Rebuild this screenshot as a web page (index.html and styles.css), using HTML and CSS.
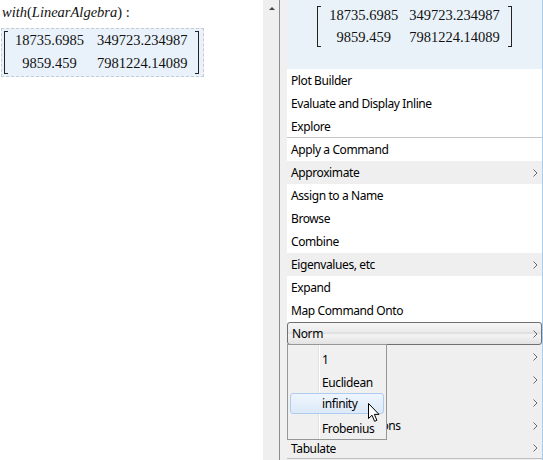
FILE: index.html
```html
<!DOCTYPE html>
<html lang="en">
<head>
  <meta charset="UTF-8" />
  <title>Matrix context menu</title>
  <link rel="stylesheet" href="styles.css">
</head>
<body>

<div class="screen">
  <!-- worksheet -->
  <div class="worksheet">
    <div class="input"><i>with</i>(<i>LinearAlgebra</i>) :</div>
    <div class="output">
      <div class="matrix">
        <span class="br left"></span>
        <div class="cells">
          <span>18735.6985</span><span>349723.234987</span>
          <span>9859.459</span><span>7981224.14089</span>
        </div>
        <span class="br right"></span>
      </div>
    </div>
  </div>

  <div class="scrollbar"><span class="up"></span></div>

  <!-- context menu -->
  <div class="menu">
    <div class="preview">
      <div class="matrix">
        <span class="br left"></span>
        <div class="cells">
          <span>18735.6985</span><span>349723.234987</span>
          <span>9859.459</span><span>7981224.14089</span>
        </div>
        <span class="br right"></span>
      </div>
    </div>

    <ul class="items">
      <li>Plot Builder</li>
      <li>Evaluate and Display Inline</li>
      <li class="sep">Explore</li>
      <li>Apply a Command</li>
      <li class="sub">Approximate<svg class="arrow" width="5" height="8" viewBox="0 0 5 8"><path d="M0.5 0.5 L4 4 L0.5 7.5" /></svg></li>
      <li>Assign to a Name</li>
      <li>Browse</li>
      <li>Combine</li>
      <li class="sub">Eigenvalues, etc<svg class="arrow" width="5" height="8" viewBox="0 0 5 8"><path d="M0.5 0.5 L4 4 L0.5 7.5" /></svg></li>
      <li>Expand</li>
      <li>Map Command Onto</li>
      <li class="sub hot">Norm<svg class="arrow" width="5" height="8" viewBox="0 0 5 8"><path d="M0.5 0.5 L4 4 L0.5 7.5" /></svg></li>
      <li class="sub">Plots<svg class="arrow" width="5" height="8" viewBox="0 0 5 8"><path d="M0.5 0.5 L4 4 L0.5 7.5" /></svg></li>
      <li class="sub">Queries<svg class="arrow" width="5" height="8" viewBox="0 0 5 8"><path d="M0.5 0.5 L4 4 L0.5 7.5" /></svg></li>
      <li class="sub">Solve<svg class="arrow" width="5" height="8" viewBox="0 0 5 8"><path d="M0.5 0.5 L4 4 L0.5 7.5" /></svg></li>
      <li class="sub">Standard Operations<svg class="arrow" width="5" height="8" viewBox="0 0 5 8"><path d="M0.5 0.5 L4 4 L0.5 7.5" /></svg></li>
      <li class="sub last">Tabulate<svg class="arrow" width="5" height="8" viewBox="0 0 5 8"><path d="M0.5 0.5 L4 4 L0.5 7.5" /></svg></li>
    </ul>

    <!-- Norm submenu -->
    <ul class="submenu">
      <li>1</li>
      <li>Euclidean</li>
      <li class="active">infinity</li>
      <li>Frobenius</li>
    </ul>

    <svg class="cursor" width="13" height="20" viewBox="0 0 13 20">
      <path d="M0.5 0.5 L0.5 15.5 L4 12.2 L6.6 18.3 L8.9 17.3 L6.4 11.4 L11 11.4 Z" fill="#fff" stroke="#000" stroke-width="1" />
    </svg>
  </div>
</div>

</body>
</html>
```

FILE: styles.css
```css
body {
  margin: 0;
  background: #fff;
  font-family: "Noto Sans", "Open Sans", sans-serif;
}
.screen {
  display: flex;
  width: 543px;
  height: 460px;
  overflow: hidden;
}

/* worksheet */
.worksheet {
  width: 263px;
  flex-shrink: 0;
  background: #fff;
  font-family: "Liberation Serif", serif;
  font-size: 14.5px;
  color: #111;
}
.input {
  padding: 3px 0 0 2px;
  height: 23px;
  line-height: 18px;
}
.output {
  display: inline-flex;
  margin-left: 1px;
  margin-top: 2px;
  height: 47px;
  width: 199px;
  background: #e9f1fa;
  border: 1px dashed #c6ccd4;
  align-items: center;
  padding-left: 2px;
  box-sizing: content-box;
}

/* matrix with brackets */
.matrix {
  display: flex;
  align-items: stretch;
  font-family: "Liberation Serif", serif;
  font-size: 14.5px;
  color: #111;
}
.br {
  width: 3px;
  border: 1px solid #222;
}
.br.left { border-right: none; }
.br.right { border-left: none; }
.cells {
  display: grid;
  grid-template-columns: auto auto;
  column-gap: 13px;
  padding: 0 8px;
}
.cells span {
  text-align: center;
  line-height: 22px;
}
.output .matrix { height: 43px; }
.output .cells { margin-top: -2px; padding: 0 7px; }

/* scrollbar */
.scrollbar {
  width: 16px;
  flex-shrink: 0;
  background: #efefef;
  border-right: 1px solid #8d8d8d;
}
.up {
  display: block;
  width: 0;
  height: 0;
  margin: 7px 0 0 6px;
  border-left: 3px solid transparent;
  border-right: 3px solid transparent;
  border-bottom: 3px solid #444;
}

/* context menu */
.menu {
  position: relative;
  width: 255px;
  flex-shrink: 0;
  background: #f0f0f0;
  padding-left: 7px;
  border-right: 1px solid #a9cdea;
}
.preview {
  height: 69px;
  background: #e9f1f9;
  display: flex;
  justify-content: center;
  padding-top: 6px;
  box-sizing: border-box;
}
.preview .matrix { height: 41px; }
.preview .cells { column-gap: 11px; margin-top: -2px; }

.items {
  list-style: none;
  margin: 0;
  padding: 0;
  font-size: 12px;
  letter-spacing: -0.4px;
  color: #000;
}
.items li {
  height: 23px;
  line-height: 23px;
  padding: 0 4px 0 4px;
  background: #fff;
  display: flex;
  justify-content: space-between;
  align-items: center;
  box-sizing: border-box;
}
.items li.sep {
  border-bottom: 1px solid #c4c4c4;
}
.items li.sub {
  background: #efefef;
}
.items li.last {
  height: 22px;
  padding-top: 1px;
  border-bottom: 1px solid #bdbdbd;
}
.items li.hot {
  border: 1px solid #6f6f6f;
  border-radius: 3px;
  padding-left: 4px;
  padding-right: 3px;
  background: linear-gradient(#f6f6f6 0%, #ececec 40%, #dcdcdc 48%, #f4f4f4 56%, #e2e2e2 100%);
}
.arrow {
  fill: none;
  stroke: #6a6a6a;
  stroke-width: 1;
}

.submenu {
  position: absolute;
  left: 7px;
  top: 344px;
  width: 98px;
  height: 92px;
  margin: 0;
  padding: 2px 0 0 0;
  list-style: none;
  background: #f0f0f0 linear-gradient(to right, transparent 30px, #e2e3e3 30px, #e2e3e3 31px, #fff 31px, #fff 32px, transparent 32px);
  border: 1px solid #979797;
  font-size: 12px;
  letter-spacing: -0.4px;
  color: #000;
}
.submenu li {
  height: 23px;
  line-height: 23px;
  padding-left: 31px;
  margin: 0 2px;
  box-sizing: border-box;
  border: 1px solid transparent;
  border-radius: 3px;
}
.submenu li.active {
  border-color: #aeccf0;
  background: linear-gradient(#eef5fd, #dde9f8);
  height: 21px;
  line-height: 19px;
  margin-bottom: 2px;
}
.cursor {
  position: absolute;
  left: 88px;
  top: 403px;
}
```
